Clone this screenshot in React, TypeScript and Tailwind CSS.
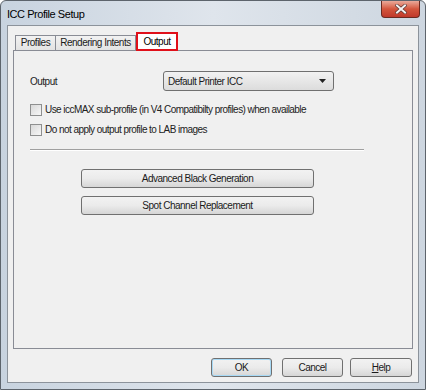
import React from 'react'

const font = { fontFamily: '"Liberation Sans", Arial, sans-serif' }

function Checkbox({ label }: { label: string }) {
  return (
    <div className="flex items-center h-[13px] text-[10px] tracking-[-0.55px] text-[#222]">
      <span className="w-[12px] h-[12px] border border-[#8e8f8f] bg-gradient-to-br from-[#d8d8d8] to-[#f7f7f7] shrink-0" />
      <span className="ml-[3px] leading-none">{label}</span>
    </div>
  )
}

function Button({ label, className = '', children }: { label?: string; className?: string; children?: React.ReactNode }) {
  return (
    <div
      className={`flex items-center justify-center h-[19px] rounded-[3px] border border-[#707070] bg-gradient-to-b from-[#f2f2f2] via-[#ebebeb] to-[#d6d6d6] text-[10px] tracking-[-0.5px] text-[#1a1a1a] ${className}`}
    >
      {children ?? label}
    </div>
  )
}

export default function App() {
  return (
    <div style={font} className="w-[426px] h-[390px] bg-white">
      <div className="w-[426px] h-[390px] flex flex-col border border-[#5d646c] rounded-t-[6px] bg-gradient-to-r from-[#c8d3df] via-[#dfe5ec] to-[#cdd6e0]">
        {/* Title bar */}
        <div className="h-[24px] flex items-start justify-between pl-[6px] pr-[5px]">
          <span className="mt-[5px] text-[11px] tracking-[-0.45px] text-black">ICC Profile Setup</span>
          <div className="w-[39px] h-[17px] rounded-b-[4px] border border-[#6b2a20] border-t-0 bg-gradient-to-b from-[#e9a99a] via-[#d3553c] to-[#c0392b] flex items-center justify-center">
            <svg width="12" height="10" viewBox="0 0 12 10">
              <path d="M2 1.5 L10 8.5 M10 1.5 L2 8.5" stroke="#5a3430" strokeWidth="3.4" strokeLinecap="square" />
              <path d="M2 1.5 L10 8.5 M10 1.5 L2 8.5" stroke="#f4f4f4" strokeWidth="2" strokeLinecap="square" />
            </svg>
          </div>
        </div>

        {/* Client area */}
        <div className="flex-1 mx-[6px] mb-[6px] border border-[#8c939b] bg-[#f0f0f0] flex flex-col px-[5px] pt-[6px]">
          {/* Tabs */}
          <div className="flex items-end h-[18px] relative z-10 text-[10px] tracking-[-0.5px]">
            <div className="w-[41px] h-[15px] ml-[2px] text-center border border-b-0 border-[#898c95] bg-gradient-to-b from-[#f2f2f2] to-[#e3e3e3] leading-[14px] text-[#1a1a1a]">
              Profiles
            </div>
            <div className="w-[80px] h-[15px] text-center border border-l-0 border-b-0 border-[#898c95] bg-gradient-to-b from-[#f2f2f2] to-[#e3e3e3] leading-[14px] text-[#1a1a1a]">
              Rendering Intents
            </div>
            <div className="w-[42px] h-[19px] -mb-px text-center border-2 border-[#e0101a] bg-white leading-[15px] text-black">
              Output
            </div>
          </div>

          {/* Panel */}
          <div className="h-[299px] border border-[#898c95] bg-[#f0f0f0] flex flex-col pl-[16px] pt-[20px]">
            <div className="flex items-center h-[20px]">
              <span className="w-[133px] text-[10px] tracking-[-0.5px] text-[#222]">Output</span>
              <div className="w-[171px] h-[20px] rounded-[3px] border border-[#707070] bg-gradient-to-b from-[#f2f2f2] to-[#dcdcdc] flex items-center justify-between pl-[4px] pr-[7px] text-[10px] tracking-[-0.5px] text-[#1a1a1a]">
                <span>Default Printer ICC</span>
                <svg width="7" height="4" viewBox="0 0 7 4">
                  <path d="M0 0 H7 L3.5 4 Z" fill="#222" />
                </svg>
              </div>
            </div>
            <div className="mt-[12px]">
              <Checkbox label="Use iccMAX sub-profile (in V4 Compatibilty profiles) when available" />
            </div>
            <div className="mt-[7px]">
              <Checkbox label="Do not apply output profile to LAB images" />
            </div>
            <div className="mt-[13px] w-[334px] h-[2px] border-t border-[#a0a0a0] border-b border-b-white" />
            <div className="ml-[51px] mt-[18px] w-[233px] flex flex-col gap-[8px]">
              <Button label="Advanced Black Generation" />
              <Button label="Spot Channel Replacement" />
            </div>
          </div>

          {/* Bottom buttons */}
          <div className="flex justify-end mt-[9px] pr-[1px]">
            <Button label="OK" className="w-[61px] border-[#3c7fb1] from-[#eaf6fd] via-[#d9f0fc] to-[#bee6fd] shadow-[inset_0_0_0_1px_#a7d9f5]" />
            <Button label="Cancel" className="w-[61px] ml-[10px]" />
            <Button className="w-[62px] ml-[7px]">
              <span>
                <span className="underline">H</span>elp
              </span>
            </Button>
          </div>
        </div>
      </div>
    </div>
  )
}
